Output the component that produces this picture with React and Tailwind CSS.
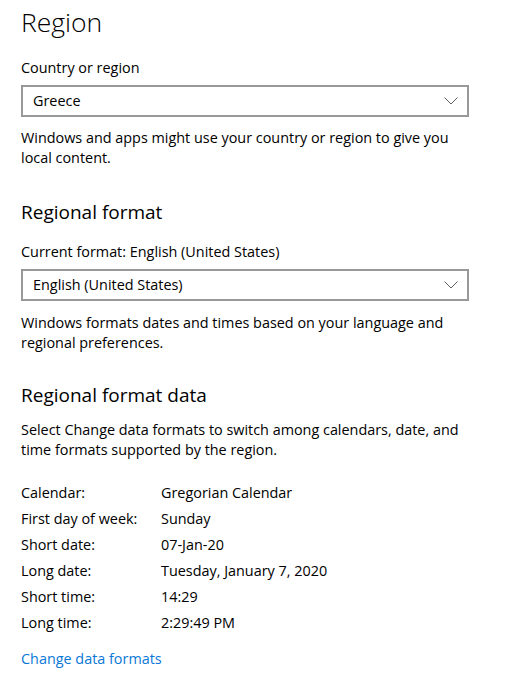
import React from 'react'

const rows = [
  ['Calendar:', 'Gregorian Calendar'],
  ['First day of week:', 'Sunday'],
  ['Short date:', '07-Jan-20'],
  ['Long date:', 'Tuesday, January 7, 2020'],
  ['Short time:', '14:29'],
  ['Long time:', '2:29:49 PM'],
]

const Chevron = () => (
  <svg width="14" height="8" viewBox="0 0 14 8" fill="none" stroke="#5f5f5f" strokeWidth="1">
    <path d="M0.5 0.5 L7 7 L13.5 0.5" />
  </svg>
)

const Select = ({ value }) => (
  <div className="flex h-[32px] w-[448px] items-center justify-between border-2 border-[#999999] bg-white pl-[10px] pr-[9px]">
    <span>{value}</span>
    <Chevron />
  </div>
)

const App = () => {
  return (
    <div
      className="min-h-screen bg-white pl-[21px] text-[14.4px] leading-[20px] text-black"
      style={{ fontFamily: '"Segoe UI", "Open Sans", sans-serif' }}
    >
      <h1 className="pt-[4px] text-[26.5px] font-light leading-[36px]">Region</h1>

      <div className="mt-[18px]">Country or region</div>
      <div className="mt-[7px]">
        <Select value="Greece" />
      </div>
      <p className="mt-[11px] w-[460px]">
        Windows and apps might use your country or region to give you local content.
      </p>

      <h2 className="mt-[30px] text-[19px] leading-[28px]">Regional format</h2>
      <div className="mt-[16px]">Current format: English (United States)</div>
      <div className="mt-[7px]">
        <Select value="English (United States)" />
      </div>
      <p className="mt-[12px] w-[460px]">
        Windows formats dates and times based on your language and regional preferences.
      </p>

      <h2 className="mt-[28px] text-[19px] leading-[28px]">Regional format data</h2>
      <p className="mt-[11px] w-[460px]">
        Select Change data formats to switch among calendars, date, and time formats supported by
        the region.
      </p>

      <div className="mt-[23px] flex flex-col gap-[6px]">
        {rows.map(([label, value]) => (
          <div key={label} className="flex">
            <span className="w-[140px]">{label}</span>
            <span>{value}</span>
          </div>
        ))}
      </div>

      <a href="#" className="mt-[16px] block text-[#0a78d6]">
        Change data formats
      </a>
    </div>
  )
}

export default App
